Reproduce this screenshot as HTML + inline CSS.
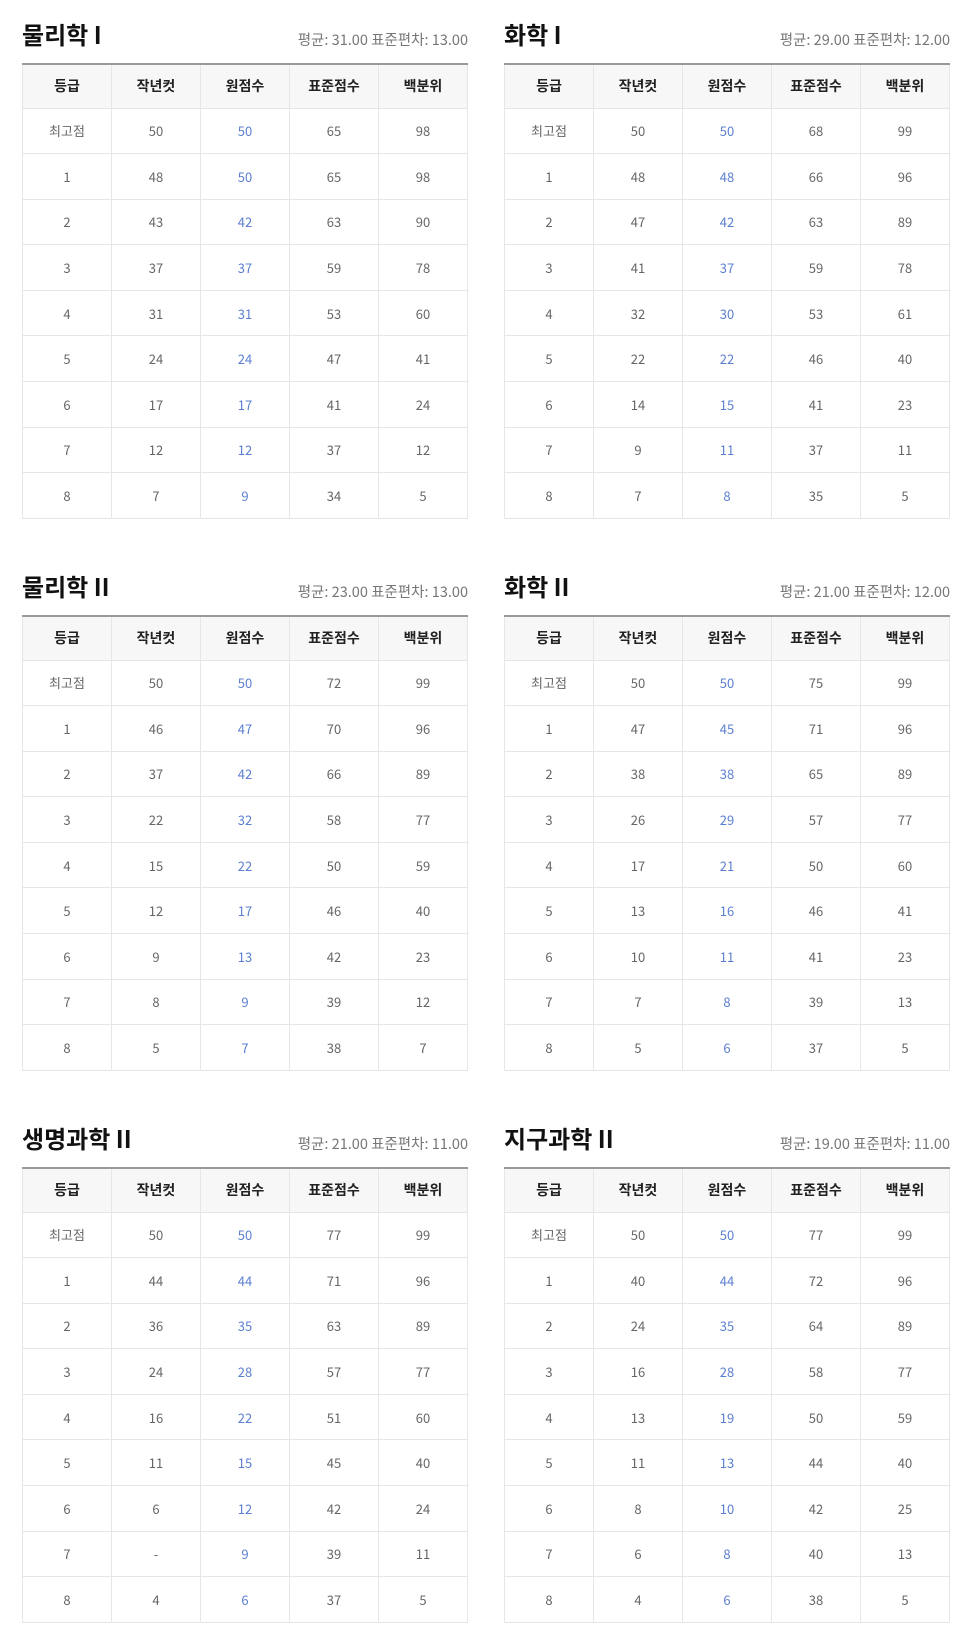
<!DOCTYPE html>
<html><head><meta charset="utf-8"><style>
*{margin:0;padding:0;box-sizing:border-box}
body{width:960px;height:1641px;background:#fff;font-family:"Noto Sans CJK KR","Liberation Sans",sans-serif;position:relative;overflow:hidden}
.sec{position:absolute;width:446px}
.ttl{position:absolute;left:0;top:1px;height:40px;line-height:40px;font-size:24px;font-weight:bold;color:#111}
.st{position:absolute;right:0;top:17px;font-size:14.5px;color:#777;line-height:20px}
table{position:absolute;left:0;top:50px;width:446px;border-collapse:collapse;border-top:2px solid #999;table-layout:fixed}
th{height:44px;background:#f7f7f7;font-size:14px;font-weight:bold;color:#222;border:1px solid #e6e6e6;border-top:none}
td{height:45.6px;text-align:center;font-size:13px;color:#666;border:1px solid #e6e6e6}
td:nth-child(3){color:#5b7fd1}
</style></head><body>
<div class="sec" style="left:22px;top:13px"><div class="ttl">물리학 I</div><div class="st">평균: 31.00 표준편차: 13.00</div>
<table><tr><th>등급</th><th>작년컷</th><th>원점수</th><th>표준점수</th><th>백분위</th></tr>
<tr><td>최고점</td><td>50</td><td>50</td><td>65</td><td>98</td></tr>
<tr><td>1</td><td>48</td><td>50</td><td>65</td><td>98</td></tr>
<tr><td>2</td><td>43</td><td>42</td><td>63</td><td>90</td></tr>
<tr><td>3</td><td>37</td><td>37</td><td>59</td><td>78</td></tr>
<tr><td>4</td><td>31</td><td>31</td><td>53</td><td>60</td></tr>
<tr><td>5</td><td>24</td><td>24</td><td>47</td><td>41</td></tr>
<tr><td>6</td><td>17</td><td>17</td><td>41</td><td>24</td></tr>
<tr><td>7</td><td>12</td><td>12</td><td>37</td><td>12</td></tr>
<tr><td>8</td><td>7</td><td>9</td><td>34</td><td>5</td></tr></table></div>

<div class="sec" style="left:504px;top:13px"><div class="ttl">화학 I</div><div class="st">평균: 29.00 표준편차: 12.00</div>
<table><tr><th>등급</th><th>작년컷</th><th>원점수</th><th>표준점수</th><th>백분위</th></tr>
<tr><td>최고점</td><td>50</td><td>50</td><td>68</td><td>99</td></tr>
<tr><td>1</td><td>48</td><td>48</td><td>66</td><td>96</td></tr>
<tr><td>2</td><td>47</td><td>42</td><td>63</td><td>89</td></tr>
<tr><td>3</td><td>41</td><td>37</td><td>59</td><td>78</td></tr>
<tr><td>4</td><td>32</td><td>30</td><td>53</td><td>61</td></tr>
<tr><td>5</td><td>22</td><td>22</td><td>46</td><td>40</td></tr>
<tr><td>6</td><td>14</td><td>15</td><td>41</td><td>23</td></tr>
<tr><td>7</td><td>9</td><td>11</td><td>37</td><td>11</td></tr>
<tr><td>8</td><td>7</td><td>8</td><td>35</td><td>5</td></tr></table></div>

<div class="sec" style="left:22px;top:565px"><div class="ttl">물리학 II</div><div class="st">평균: 23.00 표준편차: 13.00</div>
<table><tr><th>등급</th><th>작년컷</th><th>원점수</th><th>표준점수</th><th>백분위</th></tr>
<tr><td>최고점</td><td>50</td><td>50</td><td>72</td><td>99</td></tr>
<tr><td>1</td><td>46</td><td>47</td><td>70</td><td>96</td></tr>
<tr><td>2</td><td>37</td><td>42</td><td>66</td><td>89</td></tr>
<tr><td>3</td><td>22</td><td>32</td><td>58</td><td>77</td></tr>
<tr><td>4</td><td>15</td><td>22</td><td>50</td><td>59</td></tr>
<tr><td>5</td><td>12</td><td>17</td><td>46</td><td>40</td></tr>
<tr><td>6</td><td>9</td><td>13</td><td>42</td><td>23</td></tr>
<tr><td>7</td><td>8</td><td>9</td><td>39</td><td>12</td></tr>
<tr><td>8</td><td>5</td><td>7</td><td>38</td><td>7</td></tr></table></div>

<div class="sec" style="left:504px;top:565px"><div class="ttl">화학 II</div><div class="st">평균: 21.00 표준편차: 12.00</div>
<table><tr><th>등급</th><th>작년컷</th><th>원점수</th><th>표준점수</th><th>백분위</th></tr>
<tr><td>최고점</td><td>50</td><td>50</td><td>75</td><td>99</td></tr>
<tr><td>1</td><td>47</td><td>45</td><td>71</td><td>96</td></tr>
<tr><td>2</td><td>38</td><td>38</td><td>65</td><td>89</td></tr>
<tr><td>3</td><td>26</td><td>29</td><td>57</td><td>77</td></tr>
<tr><td>4</td><td>17</td><td>21</td><td>50</td><td>60</td></tr>
<tr><td>5</td><td>13</td><td>16</td><td>46</td><td>41</td></tr>
<tr><td>6</td><td>10</td><td>11</td><td>41</td><td>23</td></tr>
<tr><td>7</td><td>7</td><td>8</td><td>39</td><td>13</td></tr>
<tr><td>8</td><td>5</td><td>6</td><td>37</td><td>5</td></tr></table></div>

<div class="sec" style="left:22px;top:1117px"><div class="ttl">생명과학 II</div><div class="st">평균: 21.00 표준편차: 11.00</div>
<table><tr><th>등급</th><th>작년컷</th><th>원점수</th><th>표준점수</th><th>백분위</th></tr>
<tr><td>최고점</td><td>50</td><td>50</td><td>77</td><td>99</td></tr>
<tr><td>1</td><td>44</td><td>44</td><td>71</td><td>96</td></tr>
<tr><td>2</td><td>36</td><td>35</td><td>63</td><td>89</td></tr>
<tr><td>3</td><td>24</td><td>28</td><td>57</td><td>77</td></tr>
<tr><td>4</td><td>16</td><td>22</td><td>51</td><td>60</td></tr>
<tr><td>5</td><td>11</td><td>15</td><td>45</td><td>40</td></tr>
<tr><td>6</td><td>6</td><td>12</td><td>42</td><td>24</td></tr>
<tr><td>7</td><td>-</td><td>9</td><td>39</td><td>11</td></tr>
<tr><td>8</td><td>4</td><td>6</td><td>37</td><td>5</td></tr></table></div>

<div class="sec" style="left:504px;top:1117px"><div class="ttl">지구과학 II</div><div class="st">평균: 19.00 표준편차: 11.00</div>
<table><tr><th>등급</th><th>작년컷</th><th>원점수</th><th>표준점수</th><th>백분위</th></tr>
<tr><td>최고점</td><td>50</td><td>50</td><td>77</td><td>99</td></tr>
<tr><td>1</td><td>40</td><td>44</td><td>72</td><td>96</td></tr>
<tr><td>2</td><td>24</td><td>35</td><td>64</td><td>89</td></tr>
<tr><td>3</td><td>16</td><td>28</td><td>58</td><td>77</td></tr>
<tr><td>4</td><td>13</td><td>19</td><td>50</td><td>59</td></tr>
<tr><td>5</td><td>11</td><td>13</td><td>44</td><td>40</td></tr>
<tr><td>6</td><td>8</td><td>10</td><td>42</td><td>25</td></tr>
<tr><td>7</td><td>6</td><td>8</td><td>40</td><td>13</td></tr>
<tr><td>8</td><td>4</td><td>6</td><td>38</td><td>5</td></tr></table></div>
</body></html>
